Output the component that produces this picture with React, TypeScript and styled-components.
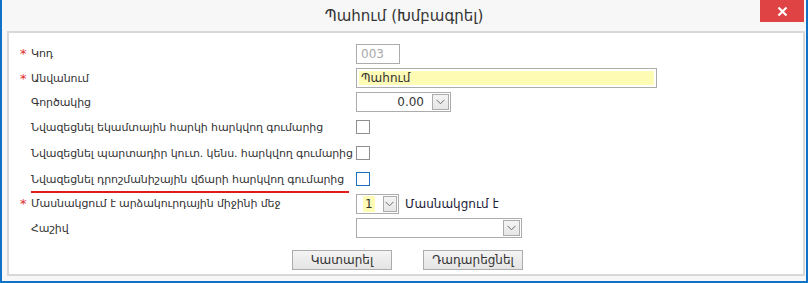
import React from 'react'
import styled, { createGlobalStyle } from 'styled-components'

const Blue = '#0f72c6'
const Border = '#acacac'
const Text = '#333333'
const Yellow = '#fdfbb4'

const GlobalStyle = createGlobalStyle`
  html, body {
    margin: 0;
    padding: 0;
    background: #ffffff;
  }
  body {
    font-family: "DejaVu Sans", "Noto Sans", sans-serif;
    color: ${Text};
  }
`

type Row = {
  label: string
  required?: boolean
  marked?: boolean
  height: number
  field: React.ReactNode
}

export default function App() {
  const rows: Row[] = [
    { label: 'Կոդ', required: true, height: 25, field: <TextInput width={44} disabled value="003" /> },
    {
      label: 'Անվանում',
      required: true,
      height: 24,
      field: (
        <TextInput width={301} highlight>
          Պահում
        </TextInput>
      ),
    },
    { label: 'Գործակից', height: 24, field: <Select width={95} value="0.00" align="right" /> },
    { label: 'Նվազեցնել եկամտային հարկի հարկվող գումարից', height: 26, field: <Checkbox /> },
    { label: 'Նվազեցնել պարտադիր կուտ. կենս. հարկվող գումարից', height: 26, field: <Checkbox /> },
    { label: 'Նվազեցնել դրոշմանիշային վճարի հարկվող գումարից', marked: true, height: 26, field: <Checkbox focused /> },
    {
      label: 'Մասնակցում է արձակուրդային միջինի մեջ',
      required: true,
      height: 23,
      field: (
        <Inline>
          <Select width={43} value="1" highlight />
          <Note>Մասնակցում է</Note>
        </Inline>
      ),
    },
    { label: 'Հաշիվ', height: 26, field: <Select width={166} value="" /> },
  ]

  return (
    <>
      <GlobalStyle />
      <Window>
        <TitleBar>
          <span />
          <Title>Պահում (Խմբագրել)</Title>
          <CloseButton aria-label="close">
            <svg width="11" height="11" viewBox="0 0 11 11">
              <path d="M1.5 1.5 L9.5 9.5 M9.5 1.5 L1.5 9.5" stroke="#fff" strokeWidth="2.2" />
            </svg>
          </CloseButton>
        </TitleBar>

        <Panel>
          <Form>
            {rows.map(row => (
              <React.Fragment key={row.label}>
                <LabelCell style={{ height: row.height }}>
                  <Star>{row.required ? '*' : ''}</Star>
                  <Label marked={row.marked}>{row.label}</Label>
                </LabelCell>
                <FieldCell style={{ height: row.height }}>{row.field}</FieldCell>
              </React.Fragment>
            ))}
          </Form>

          <ButtonRow>
            <ActionButton>Կատարել</ActionButton>
            <ActionButton>Դադարեցնել</ActionButton>
          </ButtonRow>
        </Panel>
      </Window>
    </>
  )
}

function TextInput({
  width,
  disabled,
  highlight,
  value,
  children,
}: {
  width: number
  disabled?: boolean
  highlight?: boolean
  value?: string
  children?: React.ReactNode
}) {
  return (
    <InputBox width={width} disabled={disabled}>
      <InputFill highlight={highlight}>{value ?? children}</InputFill>
    </InputBox>
  )
}

function Select({
  width,
  value,
  align,
  highlight,
}: {
  width: number
  value: string
  align?: 'left' | 'right'
  highlight?: boolean
}) {
  return (
    <SelectBox width={width}>
      <SelectValue align={align}>
        {highlight ? <Marked>{value}</Marked> : value}
      </SelectValue>
      <ArrowButton>
        <svg width="9" height="6" viewBox="0 0 9 6">
          <path d="M0.5 0.8 L4.5 4.8 L8.5 0.8" fill="none" stroke="#6d6d6d" strokeWidth="1" />
        </svg>
      </ArrowButton>
    </SelectBox>
  )
}

const Window = styled.div`
  box-sizing: border-box;
  width: 808px;
  height: 283px;
  display: flex;
  flex-direction: column;
  background: #f7f7f7;
  border: 2px solid ${Blue};
  border-top: none;
`

const TitleBar = styled.div`
  height: 31px;
  display: grid;
  grid-template-columns: 46px 1fr 46px;
  align-items: start;
`

const Title = styled.div`
  align-self: center;
  text-align: center;
  font-size: 15px;
  color: ${Text};
  padding-top: 1px;
`

const CloseButton = styled.div`
  width: 44px;
  height: 22px;
  display: flex;
  align-items: center;
  justify-content: center;
  background: #e04343;
`

const Panel = styled.div`
  flex: 1;
  margin: 0 1px 5px 5px;
  border: 2px solid #d8d8d8;
  background: #ffffff;
  padding-top: 8px;
`

const Form = styled.div`
  display: grid;
  grid-template-columns: 347px 1fr;
`

const LabelCell = styled.div`
  display: flex;
  align-items: center;
  padding-left: 11px;
`

const Star = styled.span`
  flex: none;
  width: 11px;
  color: #e52b2b;
  font-size: 13px;
  line-height: 1;
`

const Label = styled.span<{ marked?: boolean }>`
  position: relative;
  font-size: 11px;
  letter-spacing: -0.1px;
  white-space: nowrap;
  color: ${Text};

  ${p =>
    p.marked &&
    `
    &::after {
      content: '';
      position: absolute;
      left: 0;
      right: -5px;
      bottom: -7px;
      height: 2px;
      background: #e01b1b;
    }
  `}
`

const FieldCell = styled.div`
  display: flex;
  align-items: center;
`

const Inline = styled.div`
  display: flex;
  align-items: center;
  gap: 6px;
`

const Note = styled.span`
  font-size: 12px;
  color: #1c1c38;
`

const InputBox = styled.div<{ width: number; disabled?: boolean }>`
  box-sizing: border-box;
  width: ${p => p.width}px;
  height: 20px;
  border: 1px solid ${Border};
  padding: 2px;
  display: flex;
  font-size: 12px;
  color: ${p => (p.disabled ? '#a8a8a8' : Text)};
  background: #ffffff;
`

const InputFill = styled.div<{ highlight?: boolean }>`
  flex: 1;
  display: flex;
  align-items: center;
  padding-left: 2px;
  background: ${p => (p.highlight ? Yellow : 'transparent')};
`

const SelectBox = styled.div<{ width: number }>`
  box-sizing: border-box;
  width: ${p => p.width}px;
  height: 20px;
  border: 1px solid ${Border};
  display: flex;
  align-items: center;
  padding: 1px;
  background: #ffffff;
  font-size: 12px;
`

const SelectValue = styled.div<{ align?: 'left' | 'right' }>`
  flex: 1;
  display: flex;
  justify-content: ${p => (p.align === 'right' ? 'flex-end' : 'flex-start')};
  padding: 0 8px 0 5px;
  color: ${Text};
`

const Marked = styled.span`
  background: ${Yellow};
  padding: 1px 2px;
`

const ArrowButton = styled.div`
  box-sizing: border-box;
  width: 17px;
  height: 16px;
  border: 1px solid ${Border};
  background: linear-gradient(#f4f4f4, #e6e6e6);
  display: flex;
  align-items: center;
  justify-content: center;
`

const Checkbox = styled.div<{ focused?: boolean }>`
  box-sizing: border-box;
  width: 14px;
  height: 14px;
  border: 1px solid ${p => (p.focused ? '#1e6fc0' : '#8f8f8f')};
  background: #ffffff;
`

const ButtonRow = styled.div`
  display: flex;
  gap: 31px;
  padding-left: 283px;
  margin-top: 9px;
`

const ActionButton = styled.div`
  box-sizing: border-box;
  width: 100px;
  height: 20px;
  border: 1px solid ${Border};
  background: linear-gradient(#f4f4f4, #e4e4e4);
  display: flex;
  align-items: center;
  justify-content: center;
  font-size: 12px;
  color: ${Text};
`
